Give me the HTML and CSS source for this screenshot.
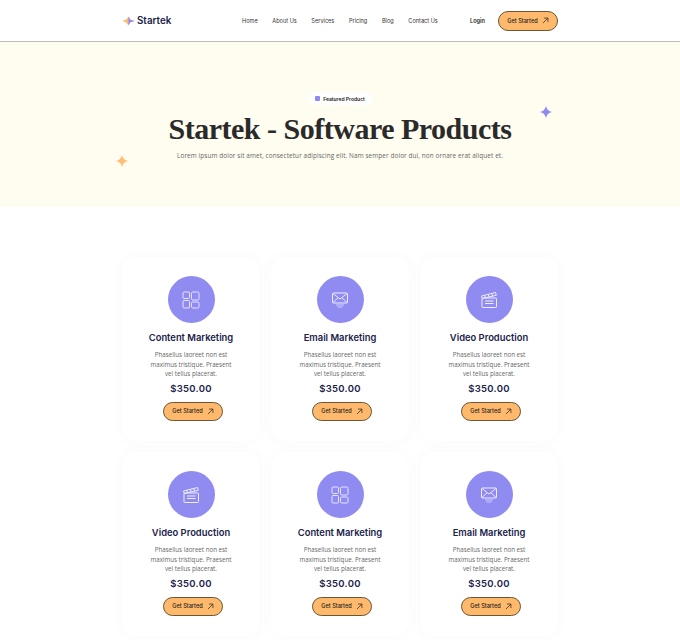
FILE: index.html
```html
<!DOCTYPE html>
<html>
<head>
<meta charset="utf-8">
<title>Startek - Software Products</title>
<link rel="stylesheet" href="styles.css">
</head>
<body>
<svg class="defs" width="0" height="0">
  <symbol id="arrow" viewBox="0 0 10 10"><path d="M1.500 8.500 8.500 1.500M2.800 1.500h5.700v5.700" fill="none" stroke="currentColor" stroke-width="1"/></symbol>
  <symbol id="i-grid" viewBox="0 0 18 18"><g fill="none" stroke="#e6e3ff" stroke-width="1"><rect x="1" y="1" width="6.500" height="6.500" rx="1"/><rect x="9.500" y="1" width="7.500" height="8" rx="1.200"/><rect x="1" y="9.500" width="6.500" height="7.500" rx="1"/><rect x="9.500" y="11" width="7.500" height="6" rx="1.200"/></g></symbol>
  <symbol id="i-mail" viewBox="0 0 18 18"><g fill="none" stroke="#eeecff" stroke-width="1"><rect x="1.500" y="2" width="15" height="10" rx="1"/><path d="M2 2.500 9 8l7-5.500M2 11.500l5-4.700M16 11.500l-5-4.700"/><path d="M5 14h8M6.500 16h5" stroke="#cfcbff"/></g></symbol>
  <symbol id="i-film" viewBox="0 0 18 18"><g fill="none" stroke="#eeecff" stroke-width="1"><rect x="2" y="7" width="14.500" height="9.500" rx=".8"/><path d="M1.500 5 15.500 1.500l.8 2.800L2.300 7.500zM4.500 4.300l1.300 2.600M8 3.400l1.300 2.600M11.500 2.500l1.300 2.600M5 10h8.500M5 12.500h8.500"/></g></symbol>
</svg>

<header class="topbar">
  <div class="topbar-inner">
    <a class="logo" href="#">
      <svg class="logo-mark" width="13" height="10" viewBox="0 0 13 10"><path d="M0 5 4 3.800 6.500.5 7.500 3.800 7.500 6.200 6.500 9.500 4 6.200z" fill="#ffb86b"/><path d="M6.500.5 8.500 3.800 13 5 8.500 6.200 6.500 9.500z" fill="#8f88f0"/></svg>
      <span>Startek</span>
    </a>
    <nav class="nav">
      <a href="#">Home</a>
      <a href="#">About Us</a>
      <a href="#">Services</a>
      <a href="#">Pricing</a>
      <a href="#">Blog</a>
      <a href="#">Contact Us</a>
    </nav>
    <a class="login" href="#">Login</a>
    <a class="btn btn-top" href="#">Get Started <svg width="7" height="7"><use href="#arrow"/></svg></a>
  </div>
</header>

<section class="hero">
  <svg class="spark spark-orange" viewBox="0 0 12 12"><path d="M6 0C6.800 3.500 8.500 5.200 12 6 8.500 6.800 6.800 8.500 6 12 5.200 8.500 3.500 6.800 0 6 3.500 5.200 5.200 3.500 6 0z"/></svg>
  <svg class="spark spark-purple" viewBox="0 0 12 12"><path d="M6 0C6.800 3.500 8.500 5.200 12 6 8.500 6.800 6.800 8.500 6 12 5.200 8.500 3.500 6.800 0 6 3.500 5.200 5.200 3.500 6 0z"/></svg>
  <div class="badge"><i class="badge-dot"></i>Featured Product</div>
  <h1>Startek - Software Products</h1>
  <p>Lorem ipsum dolor sit amet, consectetur adipiscing elit. Nam semper dolor dui, non ornare erat aliquet et.</p>
</section>

<main class="cards">
  <article class="card">
    <div class="circle"><svg width="18" height="18"><use href="#i-grid"/></svg></div>
    <h2>Content Marketing</h2>
    <p>Phasellus laoreet non est maximus tristique. Praesent vel tellus placerat.</p>
    <div class="price">$350.00</div>
    <a class="btn" href="#">Get Started <svg width="7" height="7"><use href="#arrow"/></svg></a>
  </article>
  <article class="card">
    <div class="circle"><svg width="18" height="18"><use href="#i-mail"/></svg></div>
    <h2>Email Marketing</h2>
    <p>Phasellus laoreet non est maximus tristique. Praesent vel tellus placerat.</p>
    <div class="price">$350.00</div>
    <a class="btn" href="#">Get Started <svg width="7" height="7"><use href="#arrow"/></svg></a>
  </article>
  <article class="card">
    <div class="circle"><svg width="18" height="18"><use href="#i-film"/></svg></div>
    <h2>Video Production</h2>
    <p>Phasellus laoreet non est maximus tristique. Praesent vel tellus placerat.</p>
    <div class="price">$350.00</div>
    <a class="btn" href="#">Get Started <svg width="7" height="7"><use href="#arrow"/></svg></a>
  </article>
  <article class="card">
    <div class="circle"><svg width="18" height="18"><use href="#i-film"/></svg></div>
    <h2>Video Production</h2>
    <p>Phasellus laoreet non est maximus tristique. Praesent vel tellus placerat.</p>
    <div class="price">$350.00</div>
    <a class="btn" href="#">Get Started <svg width="7" height="7"><use href="#arrow"/></svg></a>
  </article>
  <article class="card">
    <div class="circle"><svg width="18" height="18"><use href="#i-grid"/></svg></div>
    <h2>Content Marketing</h2>
    <p>Phasellus laoreet non est maximus tristique. Praesent vel tellus placerat.</p>
    <div class="price">$350.00</div>
    <a class="btn" href="#">Get Started <svg width="7" height="7"><use href="#arrow"/></svg></a>
  </article>
  <article class="card">
    <div class="circle"><svg width="18" height="18"><use href="#i-mail"/></svg></div>
    <h2>Email Marketing</h2>
    <p>Phasellus laoreet non est maximus tristique. Praesent vel tellus placerat.</p>
    <div class="price">$350.00</div>
    <a class="btn" href="#">Get Started <svg width="7" height="7"><use href="#arrow"/></svg></a>
  </article>
</main>
</body>
</html>
```

FILE: styles.css
```css
html, body { margin: 0; padding: 0; height: 640px; overflow: hidden; }
body { background: #fff; font-family: Inter, "Open Sans", sans-serif; color: #1f2147; }
a { color: inherit; text-decoration: none; }
.defs { position: absolute; }

.topbar { height: 41px; border-bottom: 1px solid #bdbcb8; }
.topbar-inner { width: 436px; height: 41px; margin: 0 auto; display: flex; align-items: center; }
.logo { display: flex; align-items: center; gap: 2px; font-size: 9.8px; font-weight: 600; color: #20224a; width: 120px; }
.nav { display: flex; gap: 14.6px; font-size: 5.6px; color: #333; width: 228px; }
.login { font-size: 5.6px; font-weight: 600; color: #222; width: 28px; }

.btn { display: inline-flex; align-items: center; justify-content: center; gap: 4px; width: 60px; height: 19px; border: 1px solid #6b5532; border-radius: 10px; background: #ffb96c; color: #222; font-size: 5.6px; font-weight: 500; box-sizing: border-box; }
.btn-top { height: 20px; }

.hero { position: relative; height: 165px; background: #fffcf0; text-align: center; display: flex; flex-direction: column; align-items: center; padding-top: 50px; box-sizing: border-box; }
.spark { position: absolute; width: 12px; height: 12px; }
.spark-orange { left: 116px; top: 113px; fill: #ffbd75; }
.spark-purple { left: 540px; top: 64px; fill: #8f88f0; }
.badge { display: flex; align-items: center; gap: 3px; height: 13px; padding: 0 7px; background: #fff; border-radius: 7px; font-size: 5px; font-weight: 600; color: #222; }
.badge-dot { width: 5px; height: 5px; background: #8f88f0; border-radius: 1px; }
.hero h1 { margin: 4px 0 0; font-family: "Liberation Serif", serif; font-size: 30px; line-height: 40px; font-weight: 700; color: #2a2a2a; letter-spacing: -.5px; }
.hero p { margin: 2px 0 0; font-family: "Open Sans", sans-serif; font-size: 6.4px; color: #666; letter-spacing: .1px; }

.cards { width: 436px; margin: 50px auto 0; display: grid; grid-template-columns: repeat(3, 138px); gap: 11px; }
.card { height: 184px; background: #fff; border-radius: 14px; box-shadow: 0 0 12px rgba(90, 90, 160, .04); display: flex; flex-direction: column; align-items: center; text-align: center; padding-top: 19px; box-sizing: border-box; }
.circle { width: 47px; height: 47px; border-radius: 50%; background: #908bf1; display: flex; align-items: center; justify-content: center; }
.card h2 { margin: 8px 0 0; font-size: 9.4px; line-height: 14px; font-weight: 600; color: #20224a; }
.card p { margin: 5px 0 0; width: 90px; font-family: "Open Sans", sans-serif; font-size: 6.2px; line-height: 9.5px; color: #666; }
.price { margin: 3px 0 0; font-size: 9.5px; font-weight: 600; line-height: 14px; letter-spacing: .3px; color: #20224a; }
.card .btn { margin: 6px 0 0 4px; }
```
